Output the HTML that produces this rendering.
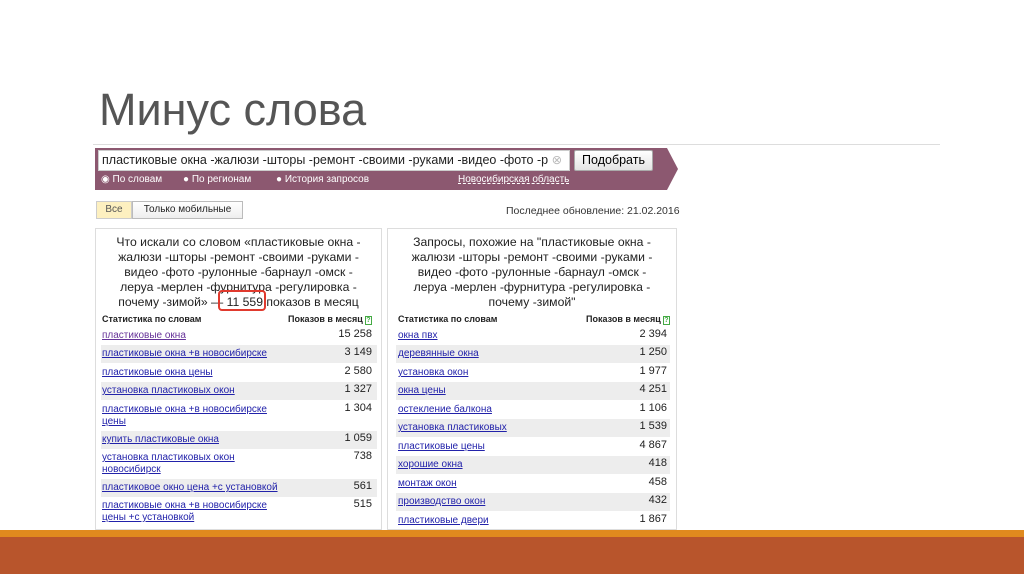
<!DOCTYPE html>
<html><head><meta charset="utf-8"><style>
*{margin:0;padding:0;box-sizing:border-box}
body{width:1024px;height:574px;overflow:hidden;background:#fff;position:relative;font-family:"Liberation Sans",Arial,sans-serif}
.a{position:absolute;white-space:nowrap}
.t{font-size:45px;color:#555;left:99px;top:84px}
.bar{left:95px;top:148px;width:572px;height:42px;background:#8c5870}
.arr{left:667px;top:148px;width:0;height:0;border-top:21px solid transparent;border-bottom:21px solid transparent;border-left:11px solid #8c5870}
.inp{left:98px;top:150px;width:472px;height:21px;background:#fff;border:1px solid #ccc;font-size:12.5px;line-height:19px;padding-left:3px;color:#222;overflow:hidden}
.btn{left:574px;top:150px;width:79px;height:21px;background:linear-gradient(#fff,#e4e4e4);border:1px solid #aaa;border-radius:2px;font-size:12.5px;line-height:19px;text-align:center}
.r{font-size:10px;color:#fff;top:174px}
.pn{border:1px solid #ddd;background:#fff;height:302px}
.h{font-size:12.2px;color:#222;text-align:center;line-height:15px;top:235px}
.sh{font-size:9px;font-weight:bold;color:#222;top:314px}
.row{position:absolute;font-size:10px;color:#22a;text-decoration:underline;line-height:12px}
.num{position:absolute;font-size:11px;color:#222;text-align:right}
.g{position:absolute;background:#ededed;height:18px}
</style></head><body>
<div class="a t">Минус слова</div>
<div class="a" style="left:93px;top:144px;width:847px;height:1px;background:#ddd"></div>
<div class="a bar"></div><div class="a arr"></div>
<div class="a inp">пластиковые окна -жалюзи -шторы -ремонт -своими -руками -видео -фото -р <span style="color:#bbb">⊗</span></div>
<div class="a btn">Подобрать</div>
<div class="a r" style="left:101px">◉ По словам</div>
<div class="a r" style="left:183px">● По регионам</div>
<div class="a r" style="left:276px">● История запросов</div>
<div class="a r" style="left:458px;text-decoration:underline dashed">Новосибирская область</div>
<div class="a" style="left:96px;top:201px;width:36px;height:18px;background:#fdf0c0;border:1px solid #ccc;font-size:10px;line-height:16px;text-align:center;color:#555">Все</div>
<div class="a" style="left:132px;top:201px;width:111px;height:18px;background:linear-gradient(#fff,#eee);border:1px solid #bbb;font-size:10px;line-height:15px;text-align:center;color:#222">Только мобильные</div>
<div class="a" style="left:506px;top:205px;font-size:10.5px;color:#333">Последнее обновление: 21.02.2016</div>
<div class="a pn" style="left:95px;top:228px;width:287px"></div>
<div class="a pn" style="left:387px;top:228px;width:290px"></div>
<div class="a h" style="left:96px;width:285px">Что искали со словом «пластиковые окна -<br>жалюзи -шторы -ремонт -своими -руками -<br>видео -фото -рулонные -барнаул -омск -<br>леруа -мерлен -фурнитура -регулировка -<br>почему -зимой» — 11 559 показов в месяц</div>
<div class="a" style="left:218px;top:290px;width:48px;height:21px;border:2.5px solid #e03a2e;border-radius:4px"></div>
<div class="a h" style="left:388px;width:288px">Запросы, похожие на "пластиковые окна -<br>жалюзи -шторы -ремонт -своими -руками -<br>видео -фото -рулонные -барнаул -омск -<br>леруа -мерлен -фурнитура -регулировка -<br>почему -зимой"</div>
<div class="a sh" style="left:102px">Статистика по словам</div>
<div class="a sh" style="left:288px">Показов в месяц <span style="color:#4a4;border:1px solid #4a4;font-size:7px">?</span></div>
<div class="a sh" style="left:398px">Статистика по словам</div>
<div class="a sh" style="left:586px">Показов в месяц <span style="color:#4a4;border:1px solid #4a4;font-size:7px">?</span></div>

<div class="g" style="left:101px;top:345px;width:276px"></div>
<div class="g" style="left:101px;top:382px;width:276px"></div>
<div class="g" style="left:101px;top:431px;width:276px"></div>
<div class="g" style="left:101px;top:479px;width:276px"></div>
<div class="g" style="left:396px;top:345px;width:274px"></div>
<div class="g" style="left:396px;top:382px;width:274px"></div>
<div class="g" style="left:396px;top:419px;width:274px"></div>
<div class="g" style="left:396px;top:456px;width:274px"></div>
<div class="g" style="left:396px;top:493px;width:274px"></div>

<div class="row" style="left:102px;top:330px;color:#639">пластиковые окна</div><div class="num" style="left:300px;width:72px;top:328px">15 258</div>
<div class="row" style="left:102px;top:348px">пластиковые окна +в новосибирске</div><div class="num" style="left:300px;width:72px;top:346px">3 149</div>
<div class="row" style="left:102px;top:367px">пластиковые окна цены</div><div class="num" style="left:300px;width:72px;top:365px">2 580</div>
<div class="row" style="left:102px;top:385px">установка пластиковых окон</div><div class="num" style="left:300px;width:72px;top:383px">1 327</div>
<div class="row" style="left:102px;top:404px">пластиковые окна +в новосибирске<br>цены</div><div class="num" style="left:300px;width:72px;top:402px">1 304</div>
<div class="row" style="left:102px;top:434px">купить пластиковые окна</div><div class="num" style="left:300px;width:72px;top:432px">1 059</div>
<div class="row" style="left:102px;top:452px">установка пластиковых окон<br>новосибирск</div><div class="num" style="left:300px;width:72px;top:450px">738</div>
<div class="row" style="left:102px;top:482px">пластиковое окно цена +с установкой</div><div class="num" style="left:300px;width:72px;top:480px">561</div>
<div class="row" style="left:102px;top:500px">пластиковые окна +в новосибирске<br>цены +с установкой</div><div class="num" style="left:300px;width:72px;top:498px">515</div>

<div class="row" style="left:398px;top:330px">окна пвх</div><div class="num" style="left:590px;width:77px;top:328px">2 394</div>
<div class="row" style="left:398px;top:348px">деревянные окна</div><div class="num" style="left:590px;width:77px;top:346px">1 250</div>
<div class="row" style="left:398px;top:367px">установка окон</div><div class="num" style="left:590px;width:77px;top:365px">1 977</div>
<div class="row" style="left:398px;top:385px">окна цены</div><div class="num" style="left:590px;width:77px;top:383px">4 251</div>
<div class="row" style="left:398px;top:404px">остекление балкона</div><div class="num" style="left:590px;width:77px;top:402px">1 106</div>
<div class="row" style="left:398px;top:422px">установка пластиковых</div><div class="num" style="left:590px;width:77px;top:420px">1 539</div>
<div class="row" style="left:398px;top:441px">пластиковые цены</div><div class="num" style="left:590px;width:77px;top:439px">4 867</div>
<div class="row" style="left:398px;top:459px">хорошие окна</div><div class="num" style="left:590px;width:77px;top:457px">418</div>
<div class="row" style="left:398px;top:478px">монтаж окон</div><div class="num" style="left:590px;width:77px;top:476px">458</div>
<div class="row" style="left:398px;top:496px">производство окон</div><div class="num" style="left:590px;width:77px;top:494px">432</div>
<div class="row" style="left:398px;top:515px">пластиковые двери</div><div class="num" style="left:590px;width:77px;top:513px">1 867</div>

<div class="a" style="left:0;top:530px;width:1024px;height:7px;background:#e08a1e"></div>
<div class="a" style="left:0;top:537px;width:1024px;height:37px;background:#b8552c"></div>
</body></html>
